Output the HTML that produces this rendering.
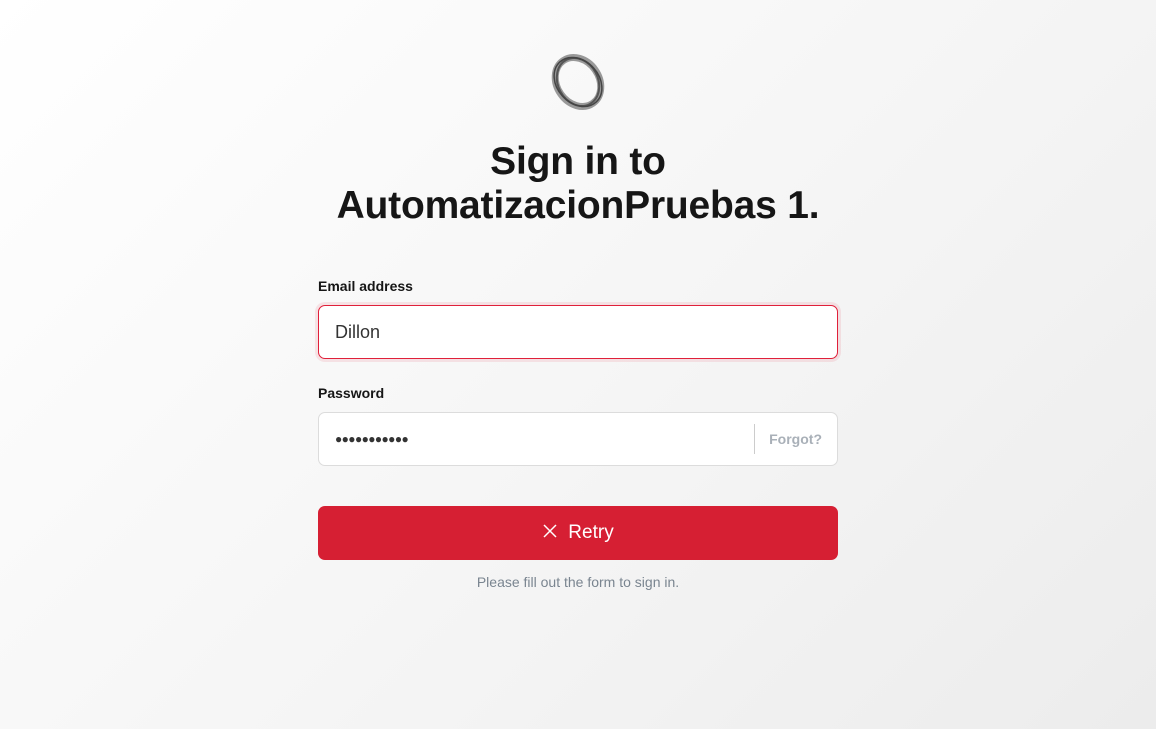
<!DOCTYPE html>
<html><head><style>
*{box-sizing:border-box;margin:0;padding:0}
html,body{width:1156px;height:729px;overflow:hidden}
body{background:linear-gradient(135deg,#ffffff 0%,#f4f4f4 60%,#ececec 100%);font-family:"Liberation Sans","DejaVu Sans",sans-serif;color:#111;position:relative}
.logo{position:absolute;left:544px;top:51px}
h1{position:absolute;left:0;width:1156px;top:140px;text-align:center;font-size:39px;line-height:44px;font-weight:bold;color:#161616;letter-spacing:-0.2px}
.lbl{position:absolute;left:318px;font-size:14px;font-weight:bold;color:#161616}
.inp{position:absolute;left:318px;width:520px;height:54px;background:#fff;border:1px solid #dcdcdc;border-radius:7px;font-size:18px;padding-left:16px;line-height:52px;color:#333}
.err{border:1px solid #e0203a;box-shadow:0 0 0 3px rgba(224,32,58,0.1)}
.sep{position:absolute;left:435px;top:11px;width:1px;height:30px;background:#ccc}
.forgot{position:absolute;right:15px;top:0;font-size:14px;color:#a9b0b8;font-weight:bold}
.btn{position:absolute;left:318px;top:506px;width:520px;height:54px;background:#d61f33;border-radius:7px;color:#fff;font-size:19px;text-align:center;line-height:54px}
.note{position:absolute;left:0;width:1156px;top:574px;text-align:center;font-size:14px;color:#7a8590}
</style></head><body>
<svg class="logo" width="68" height="62" viewBox="0 0 68 62">
<g fill="none">
<ellipse cx="34" cy="31" rx="26" ry="21" transform="rotate(55 34 31)" stroke="#999" stroke-width="7"/>
<ellipse cx="34" cy="31" rx="25" ry="20" transform="rotate(62 34 31)" stroke="#555" stroke-width="2"/>
<ellipse cx="34" cy="31" rx="27" ry="21" transform="rotate(48 34 31)" stroke="#444" stroke-width="1.5"/>
</g></svg>
<h1>Sign in to<br>AutomatizacionPruebas 1.</h1>
<div class="lbl" style="top:278px">Email address</div>
<div class="inp err" style="top:305px">Dillon</div>
<div class="lbl" style="top:385px">Password</div>
<div class="inp" style="top:412px;font-size:12px;letter-spacing:-0.6px">●●●●●●●●●●●<div class="sep"></div><div class="forgot" style="letter-spacing:0">Forgot?</div></div>
<div class="btn"><svg width="16" height="16" viewBox="0 0 16 16" style="vertical-align:-1px;margin-right:10px"><path d="M2 2L14 14M14 2L2 14" stroke="#fff" stroke-width="1.5"/></svg>Retry</div>
<div class="note">Please fill out the form to sign in.</div>
</body></html>
